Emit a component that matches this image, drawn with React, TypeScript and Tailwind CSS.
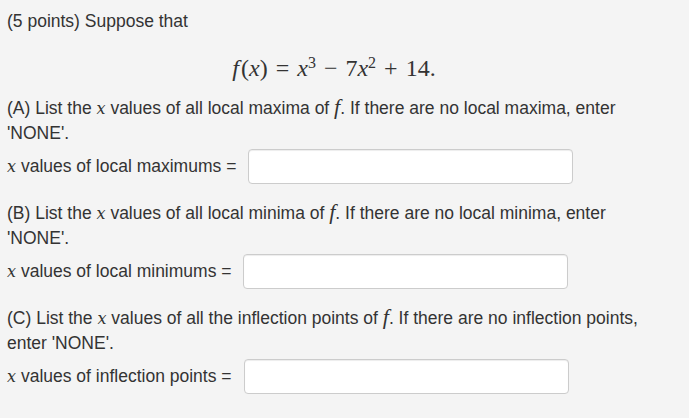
import React from 'react';

const mathFont = "font-['DejaVu_Serif','Liberation_Serif',serif]";

const X = () => <span className={`${mathFont} italic text-[16px]`}>x</span>;
const F = () => <span className="font-['Liberation_Serif',serif] italic text-[22px] leading-none">f</span>;

function Answer({ label }: { label: string }) {
  return (
    <div className="flex items-center h-[35px] mt-[3px]">
      <span>
        <X /> values of {label} =
      </span>
      <input
        type="text"
        className="ml-[12px] w-[325px] h-[35px] bg-white border border-[#cccccc] rounded-[4px] shadow-[inset_0_1px_1px_rgba(0,0,0,0.075)] outline-none"
      />
    </div>
  );
}

export default function App() {
  return (
    <div className="w-[689px] h-[418px] overflow-hidden bg-[#f4f4f4] text-[#333] font-['Liberation_Sans',Arial,sans-serif] text-[17.5px] leading-[25px] pl-[7px] pr-[28px] pt-[9px]">
      <p>(5 points) Suppose that</p>

      <div className="flex justify-center mt-[19px] mb-[12px] h-[31px] items-center text-[24px] font-['Liberation_Serif',serif]">
        <span>
          <i>f</i>
          <span className="ml-[2px]">(</span>
          <i>x</i>)<span className="mx-[8px]">=</span><i>x</i>
          <sup className="text-[16px]">3</sup>
          <span className="mx-[8px]">−</span>7<i>x</i>
          <sup className="text-[16px]">2</sup>
          <span className="mx-[8px]">+</span>14.
        </span>
      </div>

      <p>
        (A) List the <X /> values of all local maxima of <F />. If there are no local maxima, enter 'NONE'.
      </p>
      <Answer label="local maximums" />

      <p className="mt-[17px]">
        (B) List the <X /> values of all local minima of <F />. If there are no local minima, enter 'NONE'.
      </p>
      <Answer label="local minimums" />

      <p className="mt-[17px]">
        (C) List the <X /> values of all the inflection points of <F />. If there are no inflection points, enter
        'NONE'.
      </p>
      <Answer label="inflection points" />
    </div>
  );
}
